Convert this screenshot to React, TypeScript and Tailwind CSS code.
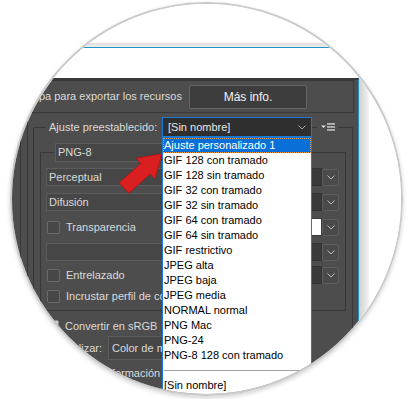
import React from 'react';

const presets = [
  'Ajuste personalizado 1',
  'GIF 128 con tramado',
  'GIF 128 sin tramado',
  'GIF 32 con tramado',
  'GIF 32 sin tramado',
  'GIF 64 con tramado',
  'GIF 64 sin tramado',
  'GIF restrictivo',
  'JPEG alta',
  'JPEG baja',
  'JPEG media',
  'NORMAL normal',
  'PNG Mac',
  'PNG-24',
  'PNG-8 128 con tramado',
];

function Chevron() {
  return (
    <svg width="8" height="5" viewBox="0 0 8 5" fill="none">
      <path d="M0.5 0.5L4 4L7.5 0.5" stroke="currentColor" strokeWidth="1" />
    </svg>
  );
}

function MenuIcon() {
  return (
    <svg width="14" height="8" viewBox="0 0 14 8" fill="#dcdcdc">
      <path d="M0 2.5h5L2.5 5z" />
      <rect x="6" y="0.3" width="8" height="1.3" />
      <rect x="6" y="3.3" width="8" height="1.3" />
      <rect x="6" y="6.3" width="8" height="1.3" />
    </svg>
  );
}

function Checkbox({ checked }: { checked?: boolean }) {
  return (
    <div
      className={
        checked
          ? 'flex h-[13px] w-[13px] shrink-0 items-center justify-center rounded-[2px] border border-[#8a8a8a] bg-[#d6d6d6]'
          : 'h-[13px] w-[13px] shrink-0 rounded-[2px] border border-[#6a6a6a] bg-[#474747]'
      }
    >
      {checked && (
        <svg width="9" height="8" viewBox="0 0 9 8" fill="none">
          <path d="M1 4l2.5 2.5L8 1" stroke="#333" strokeWidth="1.5" />
        </svg>
      )}
    </div>
  );
}

// dark input + chevron button in the right column (its label sits under the open list)
function RightControl({ white }: { white?: boolean }) {
  return (
    <div className="ml-auto flex h-[18px] items-center">
      <div
        className={
          white
            ? 'h-full w-[42px] border border-[#3a3a3a] bg-white'
            : 'h-full w-[42px] border border-[#333333] bg-[#3a3a3a]'
        }
      />
      <div className="flex h-[17px] w-[17px] items-center justify-center rounded-[2px] border border-[#5e5e5e] bg-[#4a4a4a] text-[#bdbdbd]">
        <Chevron />
      </div>
    </div>
  );
}

function Field({ children }: { children?: React.ReactNode }) {
  return (
    <div className="flex h-[18px] w-[150px] items-center border border-[#5c5c5c] bg-[#464646] pl-[2px]">
      {children}
    </div>
  );
}

export default function App() {
  return (
    <div className="h-[399px] w-[410px] overflow-hidden bg-white pl-[10px] pt-[2px] font-['Liberation_Sans',Arial,sans-serif] text-[11px] text-[#dadada]">
      <div className="h-[394px] w-[393px] overflow-hidden rounded-full border-2 border-[#cacaca] shadow-[0_2px_4px_rgba(0,0,0,0.18)]">
        <div className="relative -ml-[12px] -mt-[4px] flex h-[399px] w-[410px] flex-col bg-white">
          {/* Window strip above the dialog */}
          <div className="h-[43px] shrink-0" />
          <div className="ml-[83px] h-[4px] w-[247px] shrink-0 bg-gradient-to-b from-[#dedede] to-[#eeeeee]" />
          <div className="ml-[83px] h-px w-[247px] shrink-0 bg-[#1f95c4]" />
          <div className="h-[30px] shrink-0" />

          <div className="flex min-h-0 flex-1">
            {/* Dialog panel */}
            <div className="w-[359px] overflow-hidden border-r border-t-2 border-r-[#1b93c9] border-t-[#3a3a3a] bg-[#4d4d4d]">
              <div className="ml-[20px] flex h-[33px] w-[334px] items-center justify-end border border-[#383838] pr-[46px]">
                <span className="mr-[7px] shrink-0 whitespace-nowrap">Arrastre una capa para exportar los recursos</span>
                <div className="flex h-[24px] w-[118px] shrink-0 items-center justify-center rounded-[2px] border border-[#666666] bg-[#3d3d3d] text-[12px] text-[#f2f2f2]">
                  Más info.
                </div>
              </div>

              <div className="ml-[20px] border-l border-[#383838] pl-[6px]">
                <div className="border-l border-[#383838] pl-[5px] pt-[14px]">
                  {/* Ajuste preestablecido group */}
                  <div className="w-[320px] border border-b-0 border-[#383838] pb-[20px]">
                    <div className="-mt-[11px] flex h-[20px] items-center">
                      <span className="ml-[12px] w-[116px] bg-[#4d4d4d] pl-[3px] leading-[20px]">Ajuste preestablecido:</span>
                      <div className="flex h-[20px] w-[150px] items-center justify-between border border-[#1a78d6] bg-[#2f2f2f] pl-[5px] pr-[5px] text-[#e8e8e8] [&>svg]:text-[#a8a8a8]">
                        <span>[Sin nombre]</span>
                        <Chevron />
                      </div>
                      <div className="ml-[5px] flex h-[20px] w-[21px] items-center justify-center bg-[#4d4d4d]">
                        <MenuIcon />
                      </div>
                    </div>

                    {/* PNG-8 settings box */}
                    <div className="ml-[6px] mt-[15px] w-[306px] border border-[#383838] pb-[5px] pl-[5px] pr-[6px]">
                      <div className="-mt-[10px] flex h-[19px]">
                        <div className="ml-[9px] flex h-[19px] w-[200px] items-center border border-[#5c5c5c] bg-[#464646] pl-[2px]">PNG-8</div>
                      </div>
                      <div className="mt-[6px] flex h-[18px] items-center">
                        <Field>Perceptual</Field>
                        <RightControl />
                      </div>
                      <div className="mt-[7px] flex h-[18px] items-center">
                        <Field>Difusión</Field>
                        <RightControl />
                      </div>
                      <div className="mt-[7px] flex h-[18px] items-center">
                        <div className="ml-px flex items-center gap-[6px]">
                          <Checkbox />
                          <span>Transparencia</span>
                        </div>
                        <RightControl white />
                      </div>
                      <div className="mt-[7px] flex h-[18px] items-center">
                        <Field />
                        <RightControl />
                      </div>
                      <div className="mt-[5px] flex h-[18px] items-center">
                        <div className="ml-px flex items-center gap-[6px]">
                          <Checkbox />
                          <span>Entrelazado</span>
                        </div>
                        <RightControl />
                      </div>
                      <div className="mt-[3px] flex h-[18px] items-center">
                        <div className="ml-px flex w-[115px] items-center gap-[6px] overflow-hidden">
                          <Checkbox />
                          <span className="whitespace-nowrap">Incrustar perfil de color</span>
                        </div>
                      </div>
                    </div>

                    <div className="mt-[6px] flex h-[18px] items-center gap-[6px] pl-[12px]">
                      <Checkbox checked />
                      <span>Convertir en sRGB</span>
                    </div>
                    <div className="mt-px flex h-[24px] items-center">
                      <span className="w-[68px] text-right">Previsualizar:</span>
                      <div className="ml-[6px] flex h-[24px] w-[56px] items-center overflow-hidden whitespace-nowrap border border-r-0 border-[#5c5c5c] bg-[#464646] pl-[3px]">
                        Color de monitor
                      </div>
                    </div>
                    <div className="mt-[3px] flex h-[20px] w-[127px] items-center overflow-hidden whitespace-nowrap pl-[10px]">
                      Copyright e información de contacto
                    </div>
                  </div>
                </div>
              </div>
            </div>
            <div className="w-[10px] bg-gradient-to-r from-[#d0d0d0] via-[#e2e2e2] to-[#f4f4f4]" />
          </div>

          {/* Red pointer arrow */}
          <svg className="pointer-events-none absolute left-0 top-0" width="410" height="399">
            <polygon
              transform="translate(124 188) rotate(-42)"
              points="0,-7 29,-7 29,-14 51,0 29,14 29,7 0,7"
              fill="#d91f1f"
              stroke="#b51414"
              strokeWidth="0.8"
            />
          </svg>

          {/* Open preset list */}
          <div className="absolute left-[162px] top-[137px] w-[150px] border border-[#1a78d6] bg-white text-black">
            {presets.map((p, i) =>
              i === 0 ? (
                <div key={p} className="h-[15px] border border-dotted border-[#f0a032] bg-[#0b6fd8] leading-[13px] text-white">
                  {p}
                </div>
              ) : (
                <div key={p} className="h-[15px] whitespace-nowrap pl-px leading-[15px]">
                  {p}
                </div>
              )
            )}
            <div className="flex h-[15px] items-center px-px">
              <div className="h-px w-full bg-[#a0a0a0]" />
            </div>
            <div className="h-[15px] pl-px leading-[15px]">[Sin nombre]</div>
            <div className="h-[20px]" />
          </div>
        </div>
      </div>
    </div>
  );
}
